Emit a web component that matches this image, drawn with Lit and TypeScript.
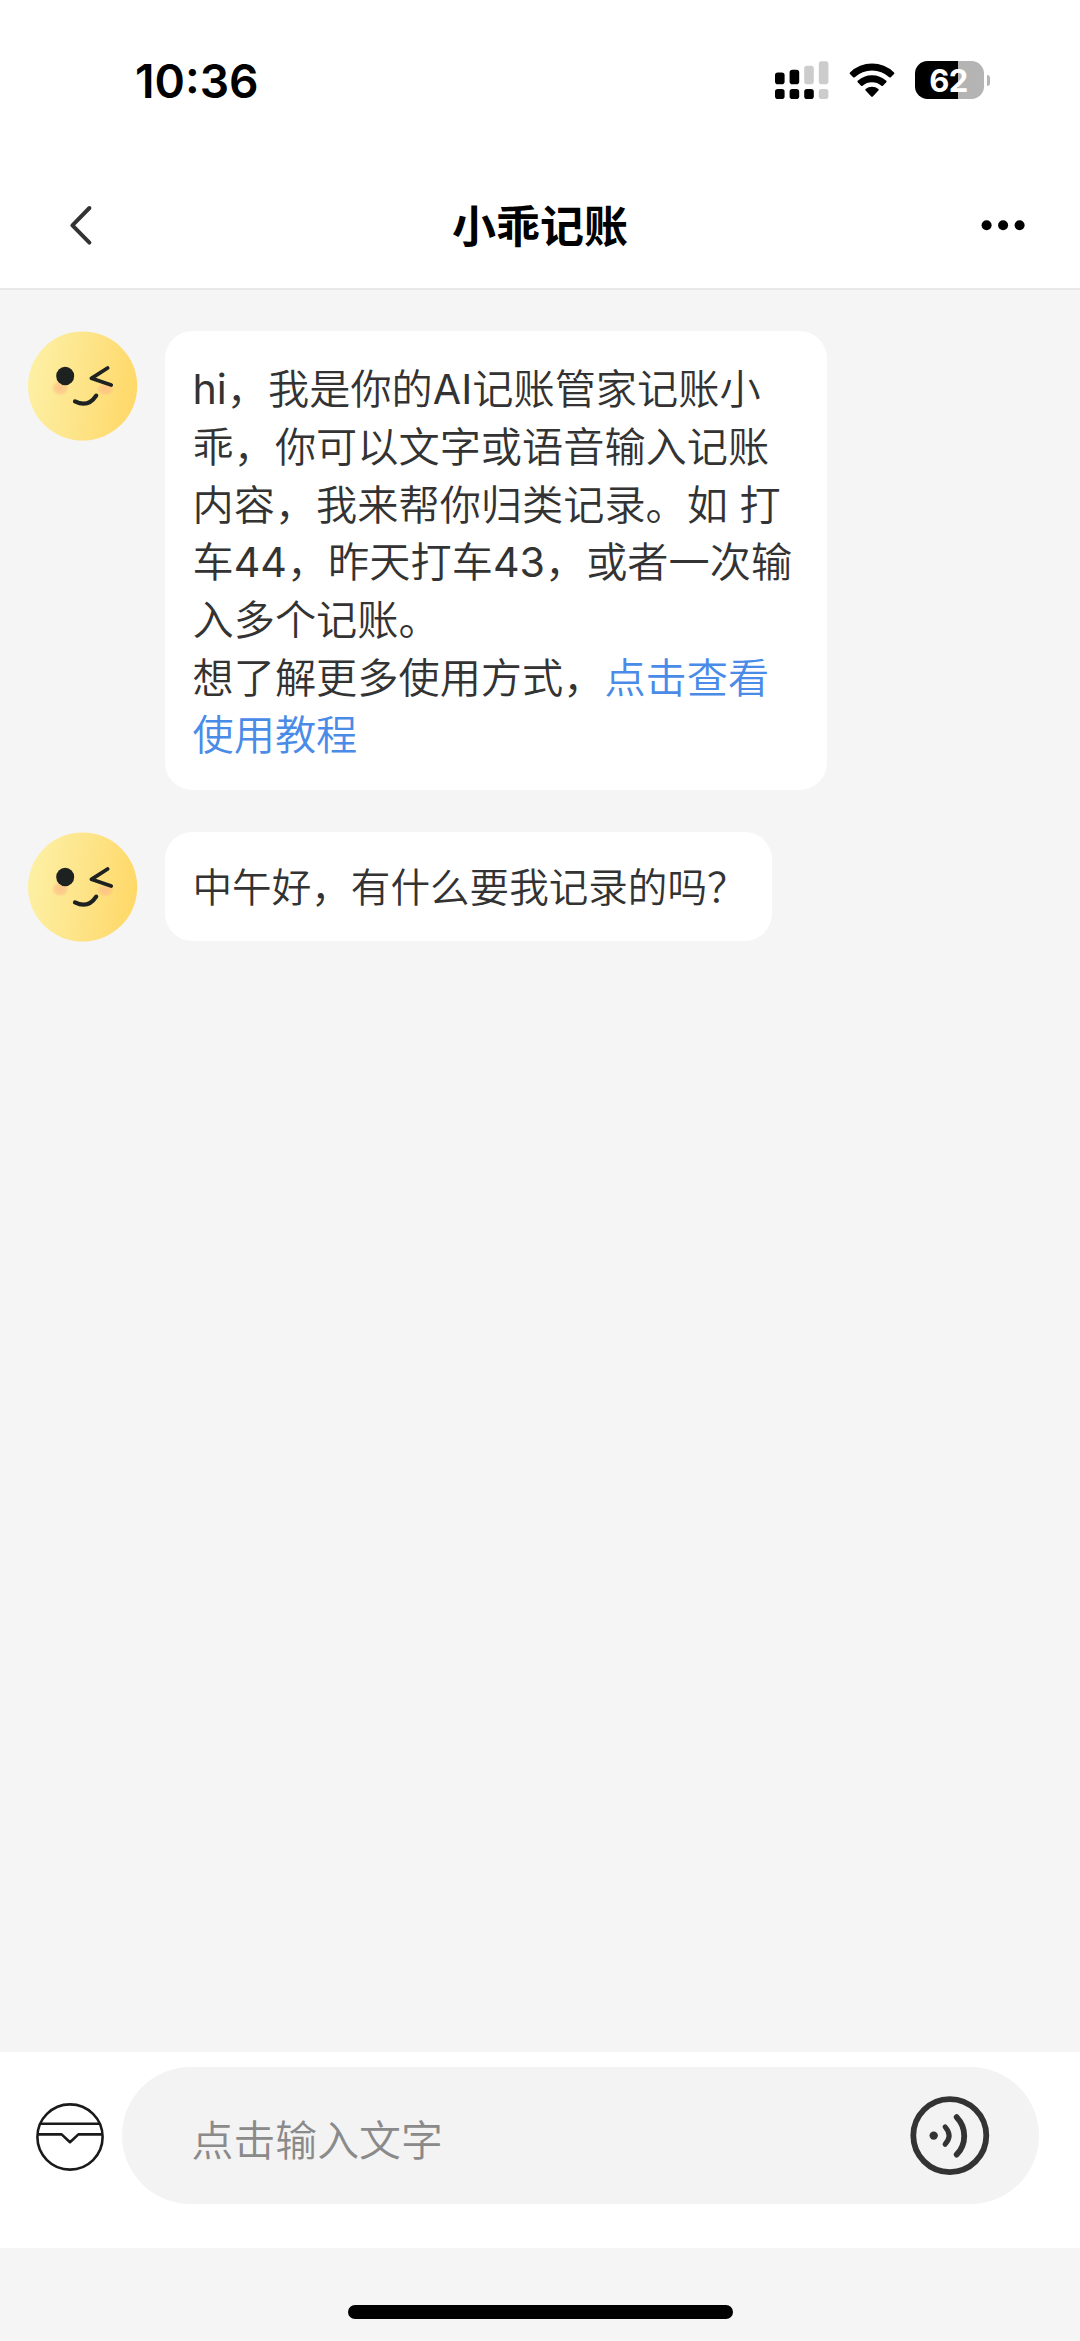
import { LitElement, html, css, svg } from "lit";
import { customElement, property } from "lit/decorators.js";

/** Upper and lower signal segments for the two SIM lines. */
const SIGNAL = [
  { x: 0, top: 11.5, upper: true, lower: true },
  { x: 14.6, top: 8.8, upper: true, lower: true },
  { x: 29.2, top: 4.8, upper: false, lower: true },
  { x: 43.8, top: 0.2, upper: false, lower: false },
];

@customElement("status-bar")
class StatusBar extends LitElement {
  static styles = css`
    :host {
      display: flex;
      justify-content: space-between;
      align-items: center;
      height: 160px;
      box-sizing: border-box;
      padding: 0 90px 0 135px;
      background: #fff;
    }
    .time {
      font-size: 46.2px;
      line-height: 60px;
      font-weight: 600;
      color: #000;
      padding-top: 2px;
    }
    .icons {
      display: flex;
      align-items: center;
    }
    .signal {
      display: block;
      margin-right: 20.5px;
    }
    .wifi {
      display: block;
      margin-right: 20px;
    }
    .battery {
      display: flex;
      align-items: center;
      justify-content: center;
      width: 69px;
      height: 38px;
      border-radius: 12.5px;
      background: linear-gradient(90deg, #000 62%, #b4b4b4 62%);
      color: #fff;
      font-size: 31px;
      line-height: 38px;
      font-weight: 700;
      letter-spacing: -0.5px;
    }
    .digits {
      padding: 1px 2px 0 0;
    }
    .tip {
      width: 3.5px;
      height: 11px;
      margin-left: 2.5px;
      border-radius: 0 4px 4px 0;
      background: #b4b4b4;
    }
  `;
  render() {
    return html`
      <span class="time">10:36</span>
      <div class="icons">
        <svg class="signal" width="54" height="38" viewBox="0 0 54 38">
          ${SIGNAL.map(
            (s) => svg`
              <rect x=${s.x} y=${s.top} width="9.6" height=${23.2 - s.top} rx="2.8" fill=${s.upper ? "#000" : "#ccc"}></rect>
              <rect x=${s.x} y="28" width="9.6" height="10" rx="2.8" fill=${s.lower ? "#000" : "#ccc"}></rect>`
          )}
        </svg>
        <svg class="wifi" width="46" height="36" viewBox="0 0 46 36">
          <path d="M1 10.4 A31.5 31.5 0 0 1 45 10.4 Q45.7 11.2 45 12 L41.8 15.2 Q41.1 15.8 40.3 15.2 A26 26 0 0 0 5.7 15.2 Q4.9 15.8 4.2 15.2 L1 12 Q0.3 11.2 1 10.4Z"></path>
          <path d="M8.7 18.8 A21 21 0 0 1 37.3 18.8 Q38 19.6 37.3 20.3 L33.9 23.7 Q33.2 24.3 32.4 23.7 A14.5 14.5 0 0 0 13.6 23.7 Q12.8 24.3 12.1 23.7 L8.7 20.3 Q8 19.6 8.7 18.8Z"></path>
          <path d="M16.6 27 A10 10 0 0 1 29.4 27 Q30.1 27.8 29.4 28.5 L23.8 34.4 Q23 35.1 22.2 34.4 L16.6 28.5 Q15.9 27.8 16.6 27Z"></path>
        </svg>
        <div class="battery"><span class="digits">62</span></div>
        <div class="tip"></div>
      </div>
    `;
  }
}

@customElement("nav-header")
class NavHeader extends LitElement {
  static styles = css`
    :host {
      display: grid;
      grid-template-columns: 1fr auto 1fr;
      align-items: center;
      height: 130px;
      box-sizing: border-box;
      padding: 2px 54px 0 67px;
      background: #fff;
      border-bottom: 2px solid #e8e8e8;
    }
    .title {
      margin: 0;
      font-size: 44px;
      line-height: 60px;
      font-weight: 600;
      color: #000;
      padding: 3px 13px 0 0;
    }
    .glyph {
      display: block;
    }
    .more {
      justify-self: end;
    }
  `;
  render() {
    return html`
      <svg class="glyph back" width="28" height="44" viewBox="0 0 28 44">
        <path d="M22.4 5 L5.4 22.3 L22.4 39.6" fill="none" stroke="#333" stroke-width="4" stroke-linecap="round" stroke-linejoin="round"></path>
      </svg>
      <h1 class="title">${this.title}</h1>
      <svg class="glyph more" width="46" height="12" viewBox="0 0 46 12">
        <circle cx="6.6" cy="6.3" r="5"></circle>
        <circle cx="23.1" cy="6.3" r="5"></circle>
        <circle cx="39.6" cy="6.3" r="5"></circle>
      </svg>
    `;
  }
}

@customElement("wink-avatar")
class WinkAvatar extends LitElement {
  static styles = css`
    :host {
      display: block;
      flex: none;
      width: 110px;
      height: 110px;
    }
    .face {
      display: block;
    }
  `;
  render() {
    return html`
      <svg class="face" width="110" height="110" viewBox="0 0 110 110">
        <defs>
          <linearGradient id="skin" x1="0" y1="0.42" x2="1" y2="0.58">
            <stop offset="0" stop-color="#fdf0a4"></stop>
            <stop offset="0.5" stop-color="#fde489"></stop>
            <stop offset="1" stop-color="#ffd867"></stop>
          </linearGradient>
          <radialGradient id="blush">
            <stop offset="0" stop-color="#fdb987" stop-opacity="0.75"></stop>
            <stop offset="0.65" stop-color="#fdbd86" stop-opacity="0.55"></stop>
            <stop offset="1" stop-color="#fdc586" stop-opacity="0"></stop>
          </radialGradient>
        </defs>
        <circle cx="54.6" cy="55" r="54.6" fill="url(#skin)"></circle>
        <ellipse cx="32.3" cy="57" rx="9" ry="8" fill="url(#blush)"></ellipse>
        <ellipse cx="77.5" cy="58" rx="9" ry="7" fill="url(#blush)"></ellipse>
        <ellipse cx="37.2" cy="45" rx="9" ry="9.3" fill="#1d211f"></ellipse>
        <g fill="none" stroke="#1d211f" stroke-linecap="round" stroke-linejoin="round">
          <path d="M79.6 37 L63.4 47.3 L83.2 54" stroke-width="3.8"></path>
          <path d="M47 70.4 Q60 77 68.2 64.6" stroke-width="4.2"></path>
        </g>
      </svg>
    `;
  }
}

interface Line {
  text?: string;
  link?: string;
}

/** Latin letters and digits carry a slightly heavier weight than the Chinese text. */
const mixed = (text: string) =>
  text.split(/([A-Za-z0-9]+)/).map((part, i) => (i % 2 ? html`<span class="latin">${part}</span>` : part));

@customElement("chat-message")
class ChatMessage extends LitElement {
  @property({ attribute: false }) lines: Line[] = [];
  @property({ type: Boolean }) compact = false;

  static styles = css`
    :host {
      display: flex;
      align-items: flex-start;
      gap: 27.5px;
    }
    .bubble {
      box-sizing: border-box;
      padding: 30.2px 27.5px 25.2px;
      width: 662px;
      border-radius: 27.5px;
      background: #fff;
      color: #333;
      font-size: 41.2px;
      line-height: 57.7px;
      font-weight: 350;
    }
    .bubble.compact {
      width: 607px;
      padding: 28px 27.5px 24px;
      font-size: 39.6px;
    }
    .line {
      white-space: nowrap;
    }
    .latin {
      font-weight: 400;
    }
    .link {
      color: #4a8be8;
    }
  `;
  render() {
    return html`
      <wink-avatar></wink-avatar>
      <div class="bubble ${this.compact ? "compact" : ""}">
        ${this.lines.map(
          (l) => html`<div class="line">${mixed(l.text ?? "")}${l.link ? html`<span class="link">${l.link}</span>` : ""}</div>`
        )}
      </div>
    `;
  }
}

@customElement("input-bar")
class InputBar extends LitElement {
  static styles = css`
    :host {
      display: flex;
      align-items: flex-start;
      height: 196px;
      box-sizing: border-box;
      padding: 14.6px 41.5px 0 35px;
      background: #fff;
      gap: 17px;
    }
    .box {
      display: block;
      margin-top: 35.4px;
    }
    .pill {
      flex: 1;
      display: flex;
      align-items: center;
      justify-content: space-between;
      height: 137.4px;
      box-sizing: border-box;
      padding: 0 48px 0 69.5px;
      border-radius: 69px;
      background: #f3f3f3;
    }
    .hint {
      font-size: 41.9px;
      line-height: 60px;
      font-weight: 350;
      color: #8a8a8a;
      padding-top: 12px;
    }
    .voice {
      display: block;
    }
  `;
  render() {
    return html`
      <svg class="box" width="70" height="70" viewBox="0 0 70 70" fill="none" stroke="#1a1a1a" stroke-width="2.6">
        <circle cx="35" cy="35" r="32.6"></circle>
        <path d="M5.8 21.7 H64.2"></path>
        <path d="M2.6 32.4 H26.6 L35 40.2 L43.4 32.4 H67.4" stroke-linejoin="round"></path>
      </svg>
      <div class="pill">
        <span class="hint">点击输入文字</span>
        <svg class="voice" width="82" height="82" viewBox="0 0 82 82" fill="none" stroke="#333" stroke-linecap="round">
          <circle cx="40.8" cy="41.6" r="36.5" stroke-width="5.8"></circle>
          <circle cx="24.7" cy="41.6" r="4.2" fill="#333" stroke="none"></circle>
          <path d="M36.1 32.9 Q44 41.6 36.1 50.3" stroke-width="5"></path>
          <path d="M47.7 23.2 A27 27 0 0 1 47.7 60.6" stroke-width="5.8"></path>
        </svg>
      </div>
    `;
  }
}

@customElement("app-root")
class AppRoot extends LitElement {
  static styles = css`
    :host {
      display: flex;
      flex-direction: column;
      width: 1080px;
      height: 2341px;
      overflow: hidden;
      background: #f5f5f5;
      font-family: Inter, "Noto Sans CJK SC", sans-serif;
    }
    .chat {
      flex: 1;
      display: flex;
      flex-direction: column;
      gap: 41.3px;
      padding: 41px 27.5px 0;
    }
    .home {
      display: flex;
      justify-content: center;
      height: 93px;
      box-sizing: border-box;
      padding-top: 57px;
    }
    .indicator {
      width: 385px;
      height: 14px;
      border-radius: 7px;
      background: #000;
    }
  `;

  private intro: Line[] = [
    { text: "hi，我是你的AI记账管家记账小" },
    { text: "乖，你可以文字或语音输入记账" },
    { text: "内容，我来帮你归类记录。如 打" },
    { text: "车44，昨天打车43，或者一次输" },
    { text: "入多个记账。" },
    { text: "想了解更多使用方式，", link: "点击查看" },
    { link: "使用教程" },
  ];

  private greeting: Line[] = [{ text: "中午好，有什么要我记录的吗？" }];

  render() {
    return html`
      <status-bar></status-bar>
      <nav-header .title=${"小乖记账"}></nav-header>
      <main class="chat">
        <chat-message .lines=${this.intro}></chat-message>
        <chat-message .lines=${this.greeting} compact></chat-message>
      </main>
      <input-bar></input-bar>
      <div class="home"><div class="indicator"></div></div>
    `;
  }
}
